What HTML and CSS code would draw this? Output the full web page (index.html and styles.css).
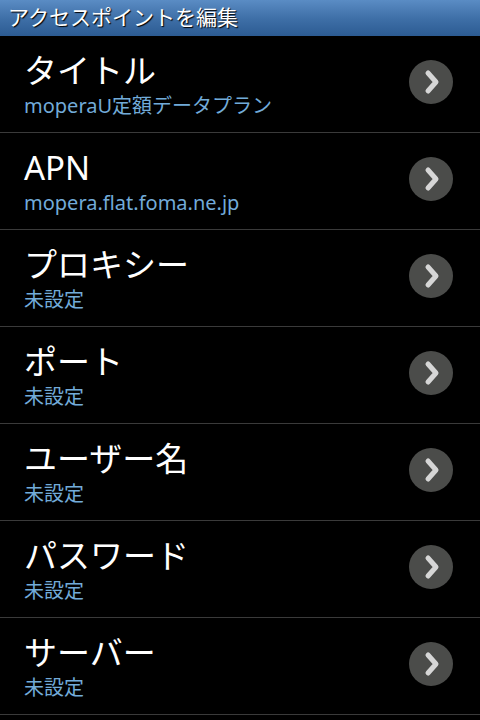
FILE: index.html
```html
<!DOCTYPE html>
<html lang="ja">
<head>
    <meta charset="UTF-8">
    <meta name="viewport" content="width=device-width, initial-scale=1.0">
    <title>アクセスポイントを編集</title>
    <link rel="stylesheet" href="styles.css">
</head>
<body>
    <div class="titlebar">アクセスポイントを編集</div>

    <ul class="prefs">
        <li class="pref">
            <div class="pref-text">
                <div class="pref-title">タイトル</div>
                <div class="pref-summary">moperaU定額データプラン</div>
            </div>
            <svg class="pref-arrow" width="44" height="44" viewBox="0 0 44 44"><circle cx="22" cy="22" r="22"/><path d="M19 13 L27 22 L19 31"/></svg>
        </li>
        <li class="pref">
            <div class="pref-text">
                <div class="pref-title">APN</div>
                <div class="pref-summary">mopera.flat.foma.ne.jp</div>
            </div>
            <svg class="pref-arrow" width="44" height="44" viewBox="0 0 44 44"><circle cx="22" cy="22" r="22"/><path d="M19 13 L27 22 L19 31"/></svg>
        </li>
        <li class="pref">
            <div class="pref-text">
                <div class="pref-title">プロキシー</div>
                <div class="pref-summary">未設定</div>
            </div>
            <svg class="pref-arrow" width="44" height="44" viewBox="0 0 44 44"><circle cx="22" cy="22" r="22"/><path d="M19 13 L27 22 L19 31"/></svg>
        </li>
        <li class="pref">
            <div class="pref-text">
                <div class="pref-title">ポート</div>
                <div class="pref-summary">未設定</div>
            </div>
            <svg class="pref-arrow" width="44" height="44" viewBox="0 0 44 44"><circle cx="22" cy="22" r="22"/><path d="M19 13 L27 22 L19 31"/></svg>
        </li>
        <li class="pref">
            <div class="pref-text">
                <div class="pref-title">ユーザー名</div>
                <div class="pref-summary">未設定</div>
            </div>
            <svg class="pref-arrow" width="44" height="44" viewBox="0 0 44 44"><circle cx="22" cy="22" r="22"/><path d="M19 13 L27 22 L19 31"/></svg>
        </li>
        <li class="pref">
            <div class="pref-text">
                <div class="pref-title">パスワード</div>
                <div class="pref-summary">未設定</div>
            </div>
            <svg class="pref-arrow" width="44" height="44" viewBox="0 0 44 44"><circle cx="22" cy="22" r="22"/><path d="M19 13 L27 22 L19 31"/></svg>
        </li>
        <li class="pref">
            <div class="pref-text">
                <div class="pref-title">サーバー</div>
                <div class="pref-summary">未設定</div>
            </div>
            <svg class="pref-arrow" width="44" height="44" viewBox="0 0 44 44"><circle cx="22" cy="22" r="22"/><path d="M19 13 L27 22 L19 31"/></svg>
        </li>
    </ul>
</body>
</html>
```

FILE: styles.css
```css
html, body {
    height: 100%;
}
body {
    margin: 0;
    background: #000;
    color: #fff;
    font-family: "Noto Sans", "Noto Sans CJK JP", sans-serif;
    overflow: hidden;
}
.titlebar {
    height: 36px;
    box-sizing: border-box;
    padding: 3px 0 0 8px;
    font-size: 21px;
    line-height: 28px;
    background: linear-gradient(#5a8cc4, #3f70a8 50%, #2c5b92);
    text-shadow: 1px 1px 1px #000;
}
.prefs {
    list-style: none;
    margin: 0;
    padding: 0;
}
.pref {
    display: flex;
    align-items: flex-start;
    height: 97px;
    box-sizing: border-box;
    border-bottom: 1px solid #3a3a3a;
    padding: 15px 27px 0 24px;
}
.pref-text {
    flex: 1;
}
.pref-title {
    font-size: 33px;
    line-height: 40px;
}
.pref-summary {
    margin-top: 2px;
    font-size: 20px;
    line-height: 26px;
    color: #72abd9;
}
.pref-arrow {
    margin-top: 9px;
}
.pref-arrow circle {
    fill: #4b4c4a;
}
.pref-arrow path {
    fill: none;
    stroke: #d6d6d6;
    stroke-width: 5;
    stroke-linecap: round;
    stroke-linejoin: round;
}
```
